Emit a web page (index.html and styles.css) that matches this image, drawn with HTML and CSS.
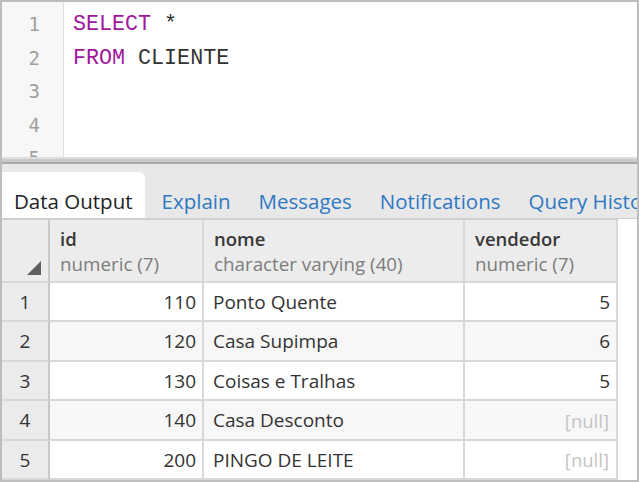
FILE: index.html
```html
<!DOCTYPE html>
<html>
<head>
<meta charset="utf-8">
<link rel="stylesheet" href="styles.css">
</head>
<body>
<div class="frame">
  <div class="editor">
    <div class="gutter">
      <div class="ln">1</div>
      <div class="ln">2</div>
      <div class="ln">3</div>
      <div class="ln">4</div>
      <div class="ln">5</div>
    </div>
    <div class="code">
      <div class="line"><span class="kw">SELECT</span> *</div>
      <div class="line"><span class="kw">FROM</span> CLIENTE</div>
      <div class="line">&nbsp;</div>
      <div class="line">&nbsp;</div>
      <div class="line">&nbsp;</div>
    </div>
  </div>
  <div class="splitter"></div>
  <div class="tabbar">
    <div class="tab active">Data Output</div>
    <div class="tab">Explain</div>
    <div class="tab">Messages</div>
    <div class="tab">Notifications</div>
    <div class="tab">Query History</div>
  </div>
  <div class="gridwrap">
    <table class="grid">
      <colgroup>
        <col class="c0"><col class="c1"><col class="c2"><col class="c3">
      </colgroup>
      <thead>
        <tr>
          <th class="rn"><span class="sort"></span></th>
          <th><div class="hname">id</div><div class="htype">numeric (7)</div></th>
          <th><div class="hname">nome</div><div class="htype">character varying (40)</div></th>
          <th><div class="hname">vendedor</div><div class="htype">numeric (7)</div></th>
        </tr>
      </thead>
      <tbody>
        <tr class="r39"><td class="rn">1</td><td class="num">110</td><td>Ponto Quente</td><td class="num">5</td></tr>
        <tr class="r40 alt"><td class="rn">2</td><td class="num">120</td><td>Casa Supimpa</td><td class="num">6</td></tr>
        <tr class="r39"><td class="rn">3</td><td class="num">130</td><td>Coisas e Tralhas</td><td class="num">5</td></tr>
        <tr class="r40 alt"><td class="rn">4</td><td class="num">140</td><td>Casa Desconto</td><td class="num null">[null]</td></tr>
        <tr class="r39"><td class="rn">5</td><td class="num">200</td><td>PINGO DE LEITE</td><td class="num null">[null]</td></tr>
      </tbody>
    </table>
  </div>
</div>
</body>
</html>
```

FILE: styles.css
```css
html, body {
  margin: 0;
  padding: 0;
  background: #ffffff;
}

.frame {
  width: 639px;
  height: 482px;
  box-sizing: border-box;
  border: 2px solid #bdbdbd;
  display: flex;
  flex-direction: column;
  overflow: hidden;
  font-family: "Open Sans", "Noto Sans", sans-serif;
}

.editor {
  height: 155px;
  display: flex;
  overflow: hidden;
  flex: none;
}

.gutter {
  width: 62px;
  background: #f7f7f7;
  border-right: 1px solid #dddddd;
  padding-top: 6px;
  box-sizing: border-box;
  flex: none;
}

.ln {
  height: 33.5px;
  line-height: 33.5px;
  text-align: right;
  padding-right: 23px;
  font-family: "DejaVu Sans Mono", "Liberation Mono", monospace;
  font-size: 19px;
  color: #a0a0a0;
}

.code {
  flex: 1;
  padding-top: 6px;
  padding-left: 9px;
}

.line {
  height: 33.5px;
  line-height: 33.5px;
  font-family: "Liberation Mono", "DejaVu Sans Mono", monospace;
  font-size: 21.7px;
  color: #333333;
  white-space: pre;
}

.kw {
  color: #a0169d;
}

.splitter {
  height: 7px;
  flex: none;
  border-top: 2px solid #dedede;
  border-bottom: 2px solid #a9a9a9;
  box-sizing: border-box;
  background: #c9c9c9;
}

.tabbar {
  height: 55px;
  flex: none;
  background: #e8e8e8;
  display: flex;
  align-items: flex-end;
  border-bottom: 1px solid #cfcfcf;
  box-sizing: border-box;
  white-space: nowrap;
  overflow: hidden;
}

.tab {
  height: 46px;
  line-height: 58px;
  padding: 0 12px;
  margin-right: 4px;
  font-size: 20.5px;
  color: #2f78c4;
  box-sizing: border-box;
  flex: none;
}

.tab.active {
  background: #ffffff;
  color: #222222;
  border-top-right-radius: 6px;
  margin-right: 5px;
}

.gridwrap {
  flex: 1;
  background: #ffffff;
  overflow: hidden;
}

.grid {
  table-layout: fixed;
  border-collapse: separate;
  border-spacing: 0;
  width: 616px;
  border-top: 1px solid #cfcfcf;
}

.c0 { width: 48px; }
.c1 { width: 154px; }
.c2 { width: 261px; }
.c3 { width: 153px; }

.grid th, .grid td {
  border-right: 2px solid #d8d8d8;
  border-bottom: 2px solid #d8d8d8;
  box-sizing: border-box;
  padding: 0;
  overflow: hidden;
  white-space: nowrap;
}

.grid th {
  height: 63px;
  background: #ececec;
  text-align: left;
  vertical-align: top;
  padding-left: 10px;
  font-weight: normal;
}

.grid th.rn {
  position: relative;
  padding: 0;
  border-right-color: #c8c8c8;
}

.sort {
  position: absolute;
  right: 7px;
  bottom: 6px;
  width: 0;
  height: 0;
  border-left: 14px solid transparent;
  border-bottom: 14px solid #5f5f5f;
}

.hname {
  font-size: 18.5px;
  font-weight: 600;
  color: #383838;
  line-height: 25px;
  margin-top: 6px;
}

.htype {
  font-size: 18.8px;
  color: #7c7c7c;
  line-height: 25px;
  margin-top: 1px;
}

.r39 td { height: 39px; }
.r40 td { height: 40px; }

.grid td {
  font-size: 19px;
  color: #333333;
  padding-left: 9px;
  background: #ffffff;
}

.grid tr.alt td {
  background: #f7f7f7;
}

.grid td.rn {
  background: #ebebeb;
  text-align: center;
  padding: 0;
  border-right-color: #c8c8c8;
}

.grid tr.alt td.rn {
  background: #ebebeb;
}

.grid td.num {
  text-align: right;
  padding-left: 0;
  padding-right: 6px;
}

.grid td.null {
  color: #c4c4c4;
  font-size: 18.5px;
  padding-right: 7px;
}
```
